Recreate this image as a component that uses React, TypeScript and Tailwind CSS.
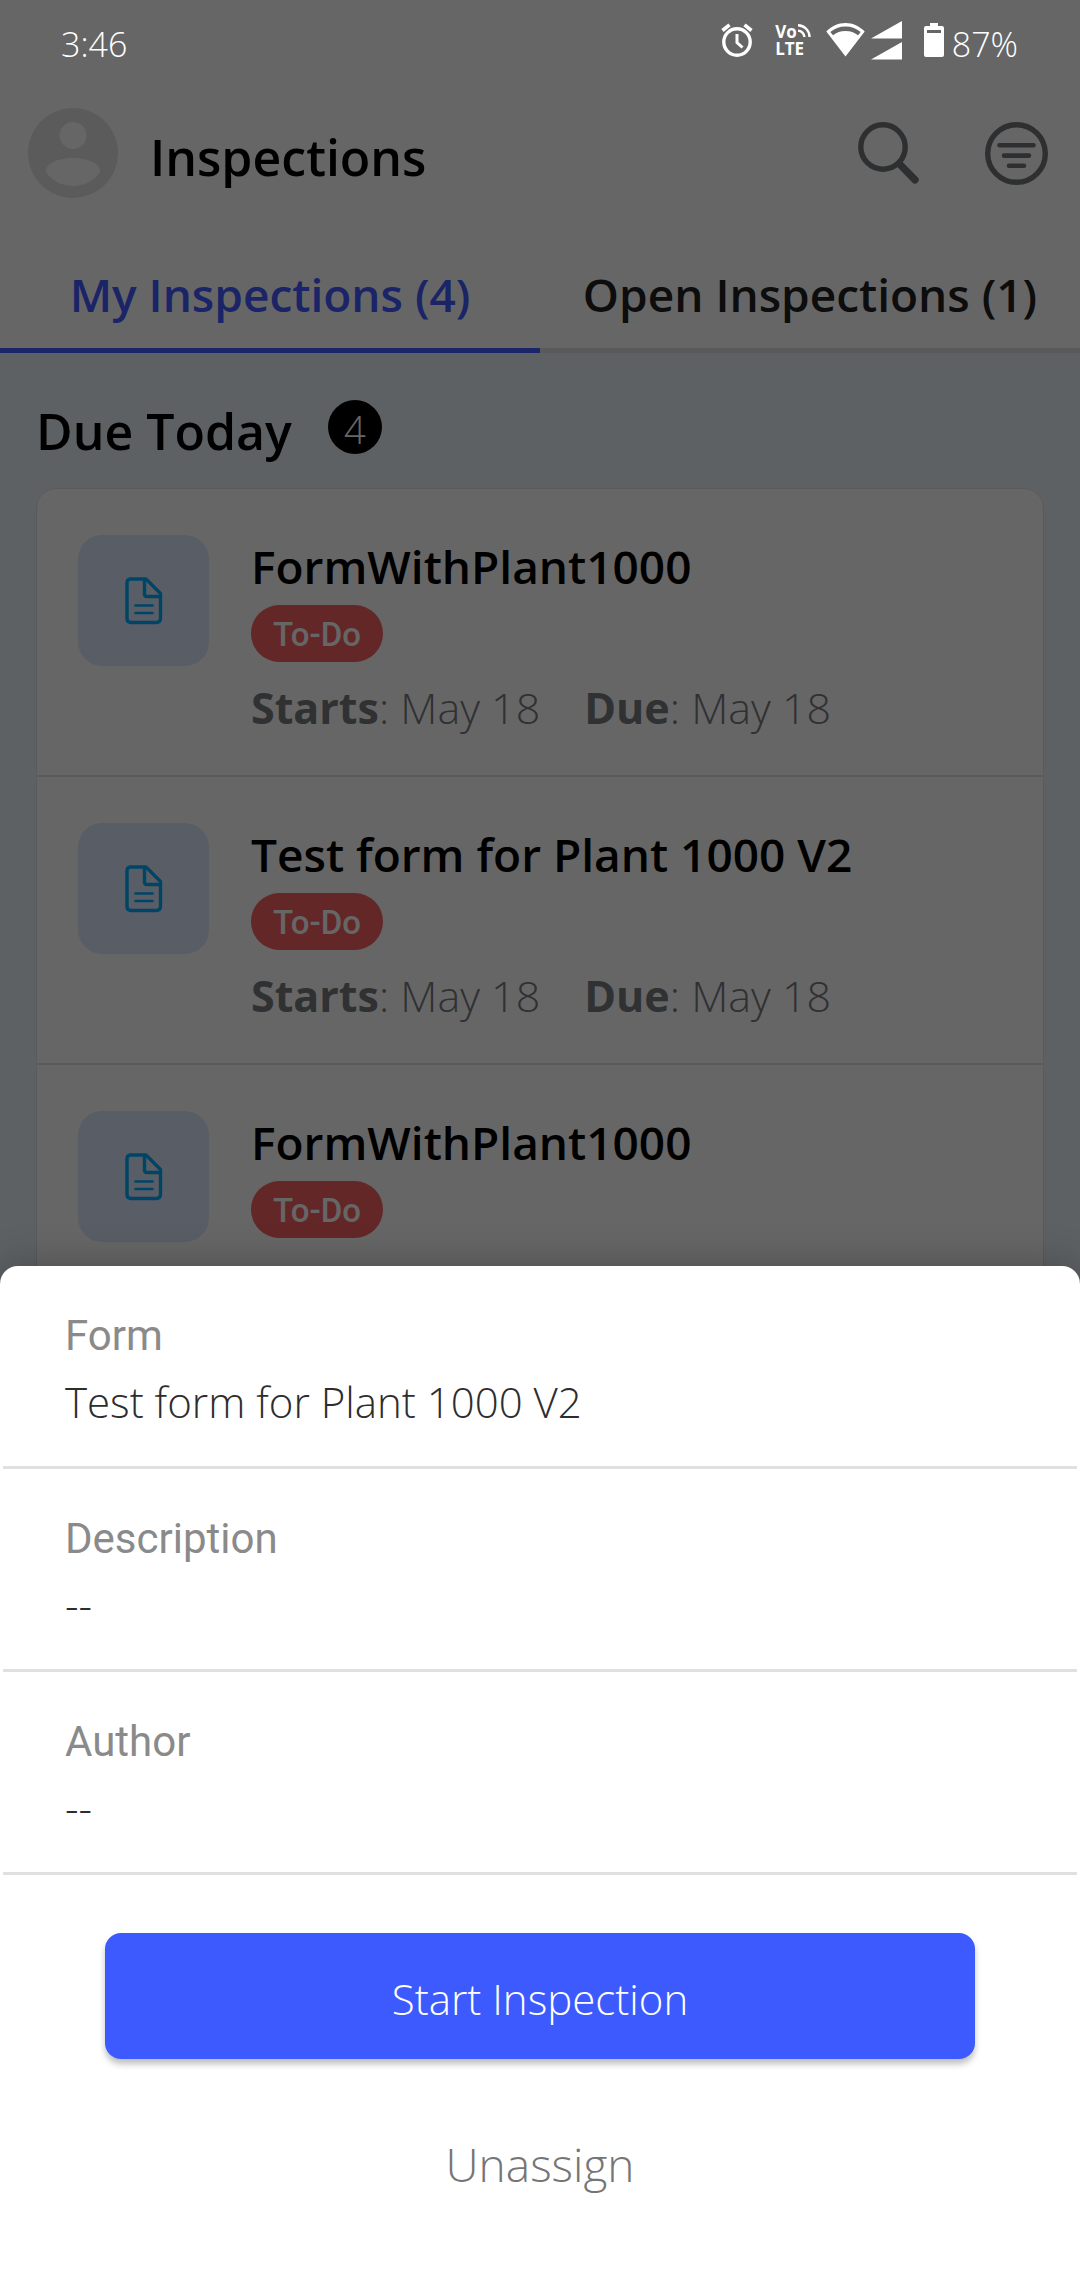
import { useState } from "react";

type Inspection = {
  id: number;
  form: string;
  status: string;
  starts: string;
  due: string;
};

const inspections: Inspection[] = [
  { id: 1, form: "FormWithPlant1000", status: "To-Do", starts: "May 18", due: "May 18" },
  { id: 2, form: "Test form for Plant 1000 V2", status: "To-Do", starts: "May 18", due: "May 18" },
  { id: 3, form: "FormWithPlant1000", status: "To-Do", starts: "May 18", due: "May 18" },
];

const details = [
  { label: "Form", value: "Test form for Plant 1000 V2" },
  { label: "Description", value: "--" },
  { label: "Author", value: "--" },
];

function StatusBar() {
  return (
    <div className="relative z-20 flex h-20 shrink-0 items-center justify-between pl-[61px] pr-[62px] text-[34px] leading-10 text-white">
      <span className="pt-2">3:46</span>
      <div className="flex items-center">
        <svg className="mr-[22px] h-[34px] w-8" viewBox="0 0 32 34" fill="none" stroke="currentColor">
          <circle cx="16" cy="19" r="13.2" strokeWidth="3.4" />
          <path d="M1.5 7.5 L8.5 1.8 M30.5 7.5 L23.5 1.8" strokeWidth="3.6" />
          <path d="M16 11 V19.5 L21.5 24.5" strokeWidth="3" />
        </svg>
        <div className="mr-[15px] flex flex-col text-[17px] font-bold leading-[17px]">
          <div className="flex items-start">
            <span>Vo</span>
            <svg className="h-4 w-[14px]" viewBox="0 0 14 16" fill="none" stroke="currentColor" strokeWidth="2.4">
              <path d="M1 2.2 A12 12 0 0 1 12.6 14" />
              <path d="M1 7.6 A6.6 6.6 0 0 1 7.4 14" />
            </svg>
          </div>
          <span>LTE</span>
        </div>
        <svg className="mr-[6px] h-[34px] w-[39px]" viewBox="0 0 39 34" fill="currentColor">
          <path
            fillRule="evenodd"
            d="M19.5 0 C12 0 5.5 3 .3 8.6 L19.5 33.5 L38.7 8.6 C33.5 3 27 0 19.5 0 Z M4.3 9 C8.5 5.3 13.5 3.4 19.5 3.4 C25.5 3.4 30.5 5.3 34.7 9 L32 12.2 C28.5 9.3 24.5 7.9 19.5 7.9 C14.5 7.9 10.5 9.3 7 12.2 Z"
          />
        </svg>
        <svg className="mr-[22px] h-[39px] w-[31px]" viewBox="0 0 31 39" fill="currentColor">
          <path d="M31 0 V17.5 H0 Z M31 21 V38.5 H0 Z" />
        </svg>
        <svg className="mr-2 h-[34px] w-5" viewBox="0 0 20 34" fill="currentColor">
          <path
            fillRule="evenodd"
            d="M6 0 H14 V3 H18 Q20 3 20 5 V32 Q20 34 18 34 H2 Q0 34 0 32 V5 Q0 3 2 3 H6 Z M3 7 V10 H17 V7 Z"
          />
        </svg>
        <span className="pt-2">87%</span>
      </div>
    </div>
  );
}

function DocumentIcon() {
  return (
    <svg className="h-12 w-[38px]" viewBox="0 0 38 48" fill="none" stroke="currentColor" strokeWidth="3.4" strokeLinejoin="round" strokeLinecap="round">
      <path d="M6 2 H21 L35.5 16.5 V41 Q35.5 45.5 31 45.5 H6 Q2 45.5 2 41.5 V6 Q2 2 6 2 Z" />
      <path d="M19.5 2.5 V17 Q19.5 19.5 22 19.5 H35" />
      <path d="M10.5 28.5 H27.5 M10.5 36 H27.5" strokeWidth="2.6" />
    </svg>
  );
}

function Header() {
  return (
    <header className="flex h-[146px] shrink-0 items-center pl-7 pr-8">
      <button type="button" aria-label="Profile">
        <svg className="h-[90px] w-[90px]" viewBox="0 0 90 90">
          <circle cx="45" cy="45" r="45" fill="#e3e3e3" />
          <circle cx="45" cy="27.5" r="13.5" fill="#fff" />
          <path d="M18 63 C18 55 31 50 45 50 C59 50 72 55 72 63 C72 66 62 78 45 78 C28 78 18 66 18 63 Z" fill="#fff" />
        </svg>
      </button>
      <h1 className="ml-8 pt-2 text-[50px] font-semibold leading-[60px] text-black">Inspections</h1>
      <div className="ml-auto flex items-center gap-[65px] text-[#727579]">
        <button type="button" aria-label="Search">
          <svg className="h-[62px] w-[62px]" viewBox="0 0 62 62" fill="none" stroke="currentColor">
            <circle cx="25" cy="25" r="22.2" strokeWidth="5.4" />
            <path d="M41.5 42 L57 57.8" strokeWidth="7.4" strokeLinecap="round" />
          </svg>
        </button>
        <button type="button" aria-label="Filter">
          <svg className="h-[63px] w-[63px]" viewBox="0 0 63 63" fill="none" stroke="currentColor" strokeLinecap="round">
            <circle cx="31.5" cy="31.5" r="28.8" strokeWidth="5.4" />
            <path d="M14.5 23.3 H48.5 M19 33.6 H44 M24 43.8 H39" strokeWidth="4.6" />
          </svg>
        </button>
      </div>
    </header>
  );
}

function InspectionRow({ item }: { item: Inspection }) {
  return (
    <li className="flex gap-[42px] border-b-2 border-[#e0e0e0] pb-9 pl-[41px] pt-[46px]">
      <div className="flex h-[131px] w-[131px] shrink-0 items-center justify-center rounded-3xl bg-[#dfebff] text-[#00aaff]">
        <DocumentIcon />
      </div>
      <div className="flex flex-col items-start">
        <h3 className="text-[46px] font-semibold leading-[62px] text-black">{item.form}</h3>
        <span className="mt-2 flex h-[57px] items-center rounded-full bg-[#f76161] px-[22px] pt-[2px] font-['Roboto',sans-serif] text-[33px] font-medium text-white">
          {item.status}
        </span>
        <p className="mt-[15px] flex gap-11 text-[43px] leading-[62px] text-[#787a7f]">
          <span>
            <b className="font-bold">Starts</b>: {item.starts}
          </span>
          <span>
            <b className="font-bold">Due</b>: {item.due}
          </span>
        </p>
      </div>
    </li>
  );
}

export default function App() {
  const [tab, setTab] = useState<"mine" | "open">("mine");

  const activeTab = "border-[#415aff] text-[#415aff]";
  const idleTab = "border-[#e0e0e0] text-[#212121]";

  return (
    <div className="relative flex h-screen flex-col overflow-hidden bg-white font-['Open_Sans',sans-serif] font-light">
      <StatusBar />
      <Header />

      <nav className="grid h-[127px] shrink-0 grid-cols-2 text-[46px] font-semibold">
        <button
          type="button"
          onClick={() => setTab("mine")}
          className={`whitespace-nowrap border-b-[5px] pt-[14px] ${tab === "mine" ? activeTab : idleTab}`}
        >
          My Inspections (4)
        </button>
        <button
          type="button"
          onClick={() => setTab("open")}
          className={`whitespace-nowrap border-b-[5px] pt-[14px] ${tab === "open" ? activeTab : idleTab}`}
        >
          Open Inspections (1)
        </button>
      </nav>

      <main className="min-h-0 flex-1 overflow-hidden bg-[#e9f2f7] px-9">
        <div className="flex h-[135px] items-center pt-3">
          <h2 className="pt-2 text-[50px] font-semibold leading-[60px] text-black">Due Today</h2>
          <span className="ml-9 flex h-[54px] w-[54px] items-center justify-center rounded-full bg-black pt-1 text-[38px] leading-[50px] text-white">
            4
          </span>
        </div>
        <ul className="rounded-t-[20px] border border-[#e0e0e0] bg-white">
          {inspections.map((item) => (
            <InspectionRow key={item.id} item={item} />
          ))}
        </ul>
      </main>

      {/* Backdrop */}
      <div className="absolute inset-0 z-10 bg-black/60" />

      {/* Bottom sheet */}
      <section
        role="dialog"
        aria-label="Inspection details"
        className="absolute inset-x-0 bottom-0 z-20 rounded-t-[18px] bg-white pb-12 shadow-[0_0_40px_rgba(0,0,0,0.25)]"
      >
        <dl>
          {details.map((d) => (
            <div key={d.label} className="mx-[3px] flex flex-col gap-3 border-b-[3px] border-[#e0e0e0] pb-[37px] pl-[62px] pt-[43px] text-[42px] leading-[54px]">
              <dt className="font-['Roboto',sans-serif] font-normal text-[#8a8a8a]">{d.label}</dt>
              <dd className="text-[#2d2d2d]">{d.value}</dd>
            </div>
          ))}
        </dl>
        <div className="flex flex-col px-[105px] pt-[58px]">
          <button
            type="button"
            className="h-[126px] rounded-2xl bg-[#3d5afe] pt-1 text-[42px] text-white shadow-[0_5px_6px_rgba(0,0,0,0.25)]"
          >
            Start Inspection
          </button>
          <button type="button" className="mt-[45px] h-[120px] text-[46px] text-[#757575]">
            Unassign
          </button>
        </div>
      </section>
    </div>
  );
}
